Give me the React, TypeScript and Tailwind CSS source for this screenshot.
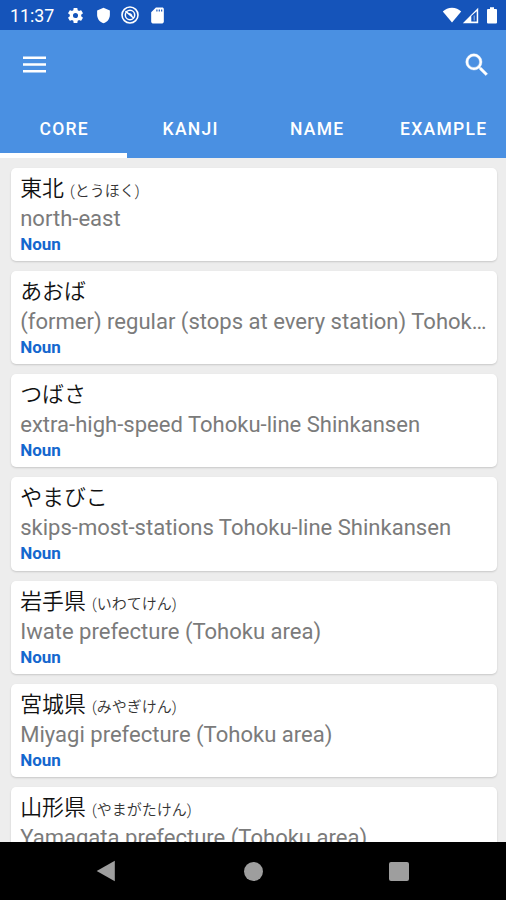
type Entry = { word: string; reading?: string; meaning: string };

const entries: Entry[] = [
  { word: "東北", reading: "とうほく", meaning: "north-east" },
  { word: "あおば", meaning: "(former) regular (stops at every station) Tohoku-line Shinkansen" },
  { word: "つばさ", meaning: "extra-high-speed Tohoku-line Shinkansen" },
  { word: "やまびこ", meaning: "skips-most-stations Tohoku-line Shinkansen" },
  { word: "岩手県", reading: "いわてけん", meaning: "Iwate prefecture (Tohoku area)" },
  { word: "宮城県", reading: "みやぎけん", meaning: "Miyagi prefecture (Tohoku area)" },
  { word: "山形県", reading: "やまがたけん", meaning: "Yamagata prefecture (Tohoku area)" },
];

const tabs = ["CORE", "KANJI", "NAME", "EXAMPLE"];

function StatusBar() {
  return (
    <div className="flex h-[30px] shrink-0 items-center bg-[#1554ba] pr-[8px] pl-[10px] text-white">
      <span className="w-[56px] pt-[2px] text-[17.800px] leading-none">11:37</span>
      <svg className="mt-px h-[19px] w-[19px]" viewBox="0 0 24 24" fill="currentColor">
        <path d="M19.14 12.94c.04-.3.06-.61.06-.94 0-.32-.02-.64-.07-.94l2.03-1.58a.49.49 0 0 0 .12-.61l-1.92-3.32a.488.488 0 0 0-.59-.22l-2.39.96c-.5-.38-1.03-.7-1.62-.94l-.36-2.54a.484.484 0 0 0-.48-.41h-3.84c-.24 0-.43.17-.47.41l-.36 2.54c-.59.24-1.13.57-1.62.94l-2.39-.96c-.22-.08-.47 0-.59.22L2.74 8.87c-.12.21-.08.47.12.61l2.03 1.58c-.05.3-.09.63-.09.94s.02.64.07.94l-2.03 1.58a.49.49 0 0 0-.12.61l1.92 3.32c.12.22.37.29.59.22l2.39-.96c.5.38 1.03.7 1.62.94l.36 2.54c.05.24.24.41.48.41h3.84c.24 0 .44-.17.47-.41l.36-2.54c.59-.24 1.13-.56 1.62-.94l2.39.96c.22.08.47 0 .59-.22l1.92-3.32c.12-.22.07-.47-.12-.61l-2.01-1.58zM12 15.2a3.2 3.2 0 1 1 0-6.4 3.2 3.2 0 0 1 0 6.4z" />
      </svg>
      <svg className="mt-px ml-[10px] h-[17px] w-[17px]" viewBox="0 0 24 24" fill="currentColor">
        <path d="M12 1 3 5v6c0 5.55 3.84 10.74 9 12 5.16-1.26 9-6.45 9-12V5z" />
      </svg>
      <svg className="ml-[8px] h-[20px] w-[20px]" viewBox="0 0 20 20" fill="none" stroke="currentColor">
        <circle cx="10" cy="10" r="8" strokeWidth="1.6" />
        <circle cx="10" cy="10" r="4.7" strokeWidth="1.5" />
        <path d="M5.5 6.2 13.6 13M8.5 8.8a2.6 2.6 0 0 1 3.2 2.6" strokeWidth="1.6" />
      </svg>
      <svg className="mt-px ml-[8px] h-[19px] w-[19px]" viewBox="0 0 24 24" fill="currentColor">
        <path d="M18 2h-8L4.02 8 4 20c0 1.1.9 2 2 2h12c1.1 0 2-.9 2-2V4c0-1.1-.9-2-2-2zm-6 5h-1.500V4.500H12V7zm3 0h-1.500V4.500H15V7zm3 0h-1.500V4.500H18V7z" />
      </svg>
      <svg className="ml-auto h-[16px] w-[20px]" viewBox="0 0 20 16" fill="currentColor">
        <path d="M.8 4.4C3.2 2.3 6.4.8 10 .8s6.8 1.5 9.2 3.6L10 15.6z" />
      </svg>
      <svg className="h-[17px] w-[17px]" viewBox="0 0 17 17">
        <path fill="currentColor" fillRule="evenodd" d="M.8 16.2 16.2.8v15.4zM9.300 9v5.500h5.400V4.2z" />
        <path fill="currentColor" d="M11.500 8.400h1.500v5.200h-1.500z" opacity=".4" />
      </svg>
      <svg className="ml-[7px] h-[17px] w-[12px]" viewBox="0 0 12 17" fill="currentColor">
        <path d="M4 .3h4v1.6h2q1 0 1 1v12.7q0 1-1 1H2q-1 0-1-1V2.900q0-1 1-1h2z" />
      </svg>
    </div>
  );
}

function EntryCard({ word, reading, meaning }: Entry) {
  return (
    <article className="h-[93.200px] shrink-0 rounded-[5px] bg-white pt-[5px] pr-[8px] pl-[9.700px] shadow-[0_1px_2px_rgba(0,0,0,0.16)]">
      <h2 className="h-[31px] text-[21.900px] leading-[31px] font-[350] whitespace-nowrap text-[#111111]">
        {word}
        {reading && <span className="ml-[6px] text-[15px] text-[#333333]">({reading})</span>}
      </h2>
      <p className="h-[28px] truncate text-[22.050px] leading-[29.600px] text-[#7b7b7b]">{meaning}</p>
      <p className="h-[24px] text-[17px] leading-[25px] font-bold text-[#1467ce]">Noun</p>
    </article>
  );
}

export default function App() {
  return (
    <div className="flex h-[900px] w-[506px] flex-col overflow-hidden bg-[#ededed] font-[Roboto,'Noto_Sans_CJK_JP',sans-serif]">
      <StatusBar />
      <header className="flex h-[127.500px] shrink-0 flex-col bg-[#4a90e2] text-white">
        <div className="flex h-[69px] items-center justify-between pr-[14px] pl-[20px]">
          <button aria-label="Menu">
            <svg className="h-[30px] w-[30px]" viewBox="0 0 30 30" fill="currentColor">
              <path d="M3 6.500h23v2.600H3zM3 13.200h23v2.600H3zM3 19.900h23v2.600H3z" />
            </svg>
          </button>
          <button aria-label="Search">
            <svg className="h-[30px] w-[30px]" viewBox="0 0 24 24" fill="currentColor" stroke="currentColor" strokeWidth=".3">
              <path d="M15.500 14h-.79l-.28-.27A6.471 6.471 0 0 0 16 9.500 6.500 6.500 0 1 0 9.500 16c1.610 0 3.090-.59 4.230-1.570l.27.28v.79l5 4.990L20.490 19l-4.990-5zm-6 0C7.010 14 5 11.990 5 9.500S7.010 5 9.500 5 14 7.010 14 9.500 11.990 14 9.500 14z" />
            </svg>
          </button>
        </div>
        <nav className="grid h-[58.500px] grid-cols-4">
          {tabs.map((tab, i) => (
            <button
              key={tab}
              className={
                i === 0
                  ? "border-b-[5px] border-white pt-[7px] pl-[2px] text-[17.500px] font-medium tracking-[1.300px]"
                  : "border-b-[5px] border-transparent pt-[7px] pl-[2px] text-[17.500px] font-medium tracking-[1.300px]"
              }
            >
              {tab}
            </button>
          ))}
        </nav>
      </header>
      <main className="flex min-h-0 flex-1 flex-col gap-[10px] overflow-hidden pt-[10.300px] pr-[9.500px] pl-[10.500px]">
        {entries.map((entry) => (
          <EntryCard key={entry.word} {...entry} />
        ))}
      </main>
      <footer className="flex h-[58px] shrink-0 items-center bg-black pl-[96px] text-[#9e9e9e]">
        <svg className="h-[22px] w-[20px]" viewBox="0 0 20 22" fill="currentColor">
          <path d="M18.800.800v20.400L.700 11z" />
        </svg>
        <span className="ml-[128px] h-[19px] w-[19px] rounded-full bg-[#9e9e9e]" />
        <span className="ml-[126px] h-[19px] w-[20px] rounded-[2px] bg-[#9e9e9e]" />
      </footer>
    </div>
  );
}
